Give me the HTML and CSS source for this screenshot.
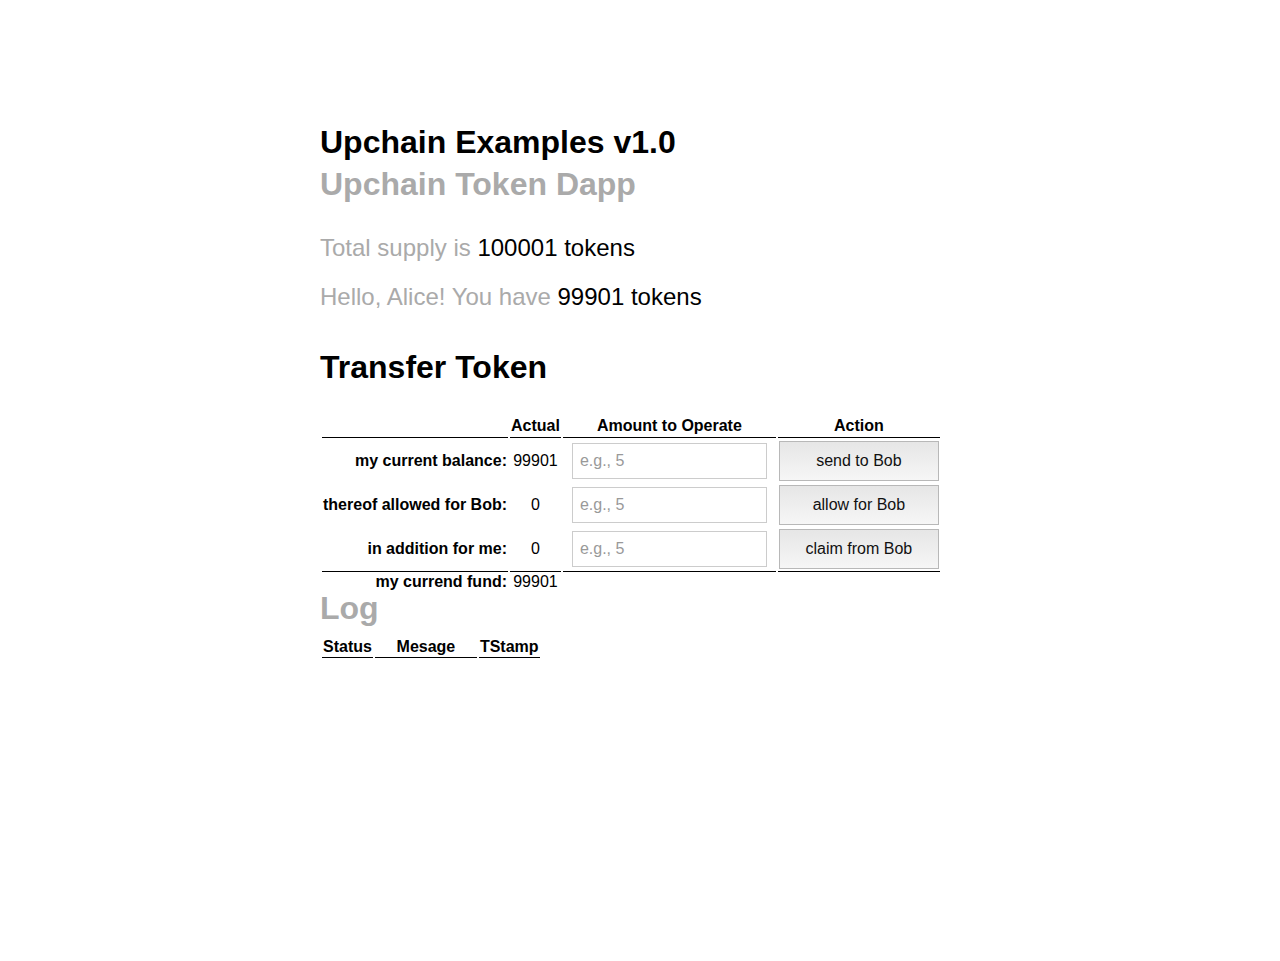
FILE: index.html
```html
<!DOCTYPE html>
<html>
<head>
<meta charset="utf-8">
<title>Upchain Token Dapp</title>
<link rel="stylesheet" href="styles.css">
</head>
<body>
<div class="container">
  <h1 class="title">Upchain Examples v1.0</h1>
  <h2 class="subtitle">Upchain Token Dapp</h2>
  <p class="info first"><span class="muted">Total supply is</span> 100001 tokens</p>
  <p class="info"><span class="muted">Hello, Alice! You have</span> 99901 tokens</p>
  <h2 class="section">Transfer Token</h2>
  <table class="transfer">
    <thead>
      <tr>
        <th class="blank"></th>
        <th>Actual</th>
        <th>Amount to Operate</th>
        <th>Action</th>
      </tr>
    </thead>
    <tbody>
      <tr>
        <th class="label">my current balance:</th>
        <td class="value">99901</td>
        <td class="amount"><input type="text" placeholder="e.g., 5"></td>
        <td class="action"><button>send to Bob</button></td>
      </tr>
      <tr>
        <th class="label">thereof allowed for Bob:</th>
        <td class="value">0</td>
        <td class="amount"><input type="text" placeholder="e.g., 5"></td>
        <td class="action"><button>allow for Bob</button></td>
      </tr>
      <tr class="last">
        <th class="label">in addition for me:</th>
        <td class="value">0</td>
        <td class="amount"><input type="text" placeholder="e.g., 5"></td>
        <td class="action"><button>claim from Bob</button></td>
      </tr>
    </tbody>
    <tfoot>
      <tr>
        <th class="label">my currend fund:</th>
        <td class="value">99901</td>
        <td></td>
        <td></td>
      </tr>
    </tfoot>
  </table>
  <h2 class="log-title">Log</h2>
  <table class="log">
    <thead>
      <tr>
        <th class="status">Status</th>
        <th class="message">Mesage</th>
        <th class="tstamp">TStamp</th>
      </tr>
    </thead>
    <tbody></tbody>
  </table>
</div>
</body>
</html>
```
FILE: styles.css
```css
html, body {
  margin: 0;
  padding: 0;
  background: #ffffff;
}

body {
  font-family: "Liberation Sans", Arial, Helvetica, sans-serif;
  color: #000000;
}

.container {
  width: 640px;
  margin: 0 auto;
  padding-top: 124px;
}

.title {
  font-size: 32px;
  font-weight: bold;
  line-height: 36px;
  margin: 0;
}

.subtitle {
  font-size: 32px;
  font-weight: bold;
  line-height: 36px;
  margin: 6px 0 0 0;
  color: #aaaaaa;
}

.info {
  font-size: 24px;
  line-height: 28px;
  margin: 21px 0 0 0;
}

.info.first {
  margin-top: 32px;
}

.muted {
  color: #aaaaaa;
}

.section {
  font-size: 32px;
  font-weight: bold;
  line-height: 36px;
  margin: 38px 0 0 0;
}

.transfer {
  margin-top: 29px;
  border-collapse: separate;
  border-spacing: 2px;
  font-size: 16px;
}

.transfer th,
.transfer td {
  padding: 1px;
  line-height: 18px;
  vertical-align: middle;
}

.transfer thead th {
  font-weight: bold;
  text-align: center;
  border-bottom: 1px solid #000000;
  padding-bottom: 2px;
}

.transfer tr.last th,
.transfer tr.last td {
  padding-bottom: 0;
}

.transfer th.label {
  text-align: right;
  font-weight: bold;
}

.transfer td.value {
  text-align: center;
}

.transfer tfoot th,
.transfer tfoot td {
  border-top: 1px solid #000000;
}

.transfer td.amount {
  text-align: center;
}

.transfer input {
  box-sizing: border-box;
  width: 195px;
  height: 36px;
  margin: 0 8px;
  padding: 0 7px;
  border: 1px solid #cccccc;
  font-family: "Liberation Sans", Arial, Helvetica, sans-serif;
  font-size: 16px;
  color: #333333;
  background: #ffffff;
  vertical-align: middle;
}

.transfer input::placeholder {
  color: #999999;
}

.transfer button {
  box-sizing: border-box;
  width: 160px;
  height: 40px;
  margin: 0;
  border: 1px solid #b8b8b8;
  border-radius: 0;
  background: linear-gradient(to bottom, #e6e6e6, #f6f6f6);
  font-family: "Liberation Sans", Arial, Helvetica, sans-serif;
  font-size: 16px;
  color: #111111;
  vertical-align: middle;
}

.log-title {
  font-size: 32px;
  font-weight: bold;
  line-height: 28px;
  margin: 0;
  color: #aaaaaa;
}

.log {
  margin-top: 13px;
  border-collapse: separate;
  border-spacing: 2px;
  font-size: 16px;
}

.log th {
  padding: 1px;
  line-height: 18px;
  font-weight: bold;
  text-align: center;
  border-bottom: 1px solid #000000;
}

.log th.status {
  width: 48px;
}

.log th.message {
  width: 100px;
}

.log th.tstamp {
  width: 58px;
}
```
